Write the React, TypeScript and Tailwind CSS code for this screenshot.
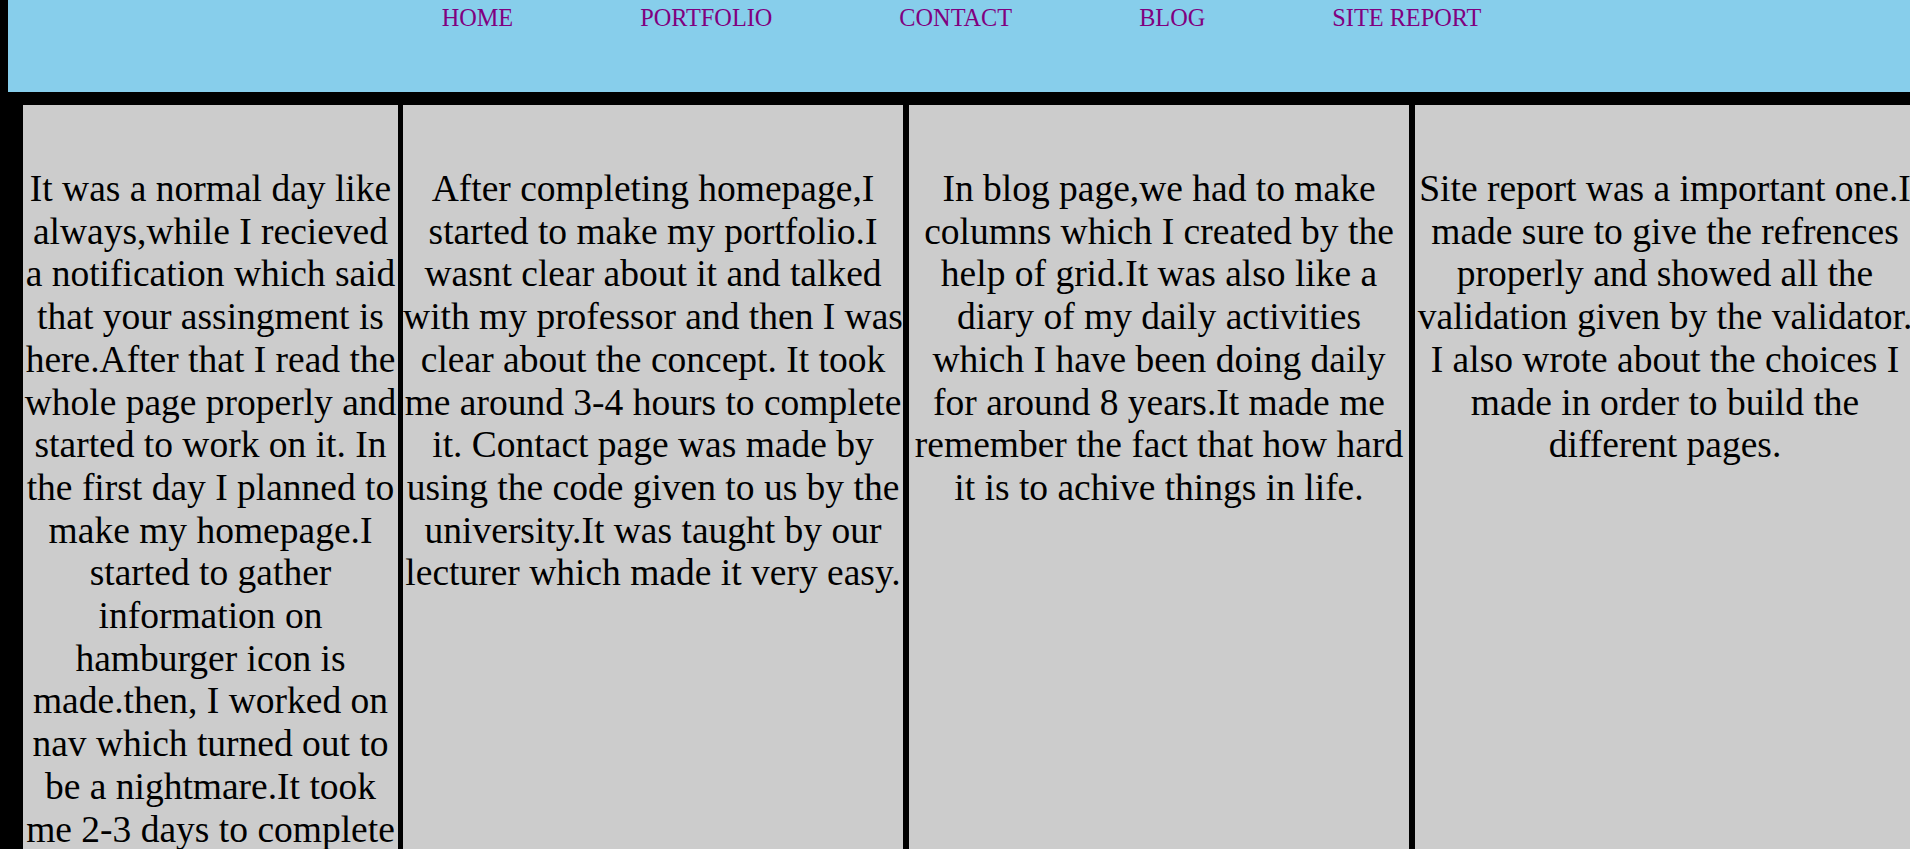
import React from 'react';

const links = ['HOME', 'PORTFOLIO', 'CONTACT', 'BLOG', 'SITE REPORT'];

const columns = [
  {
    text: 'It was a normal day like always,while I recieved a notification which said that your assingment is here.After that I read the whole page properly and started to work on it. In the first day I planned to make my homepage.I started to gather information on hamburger icon is made.then, I worked on nav which turned out to be a nightmare.It took me 2-3 days to complete it.',
    cls: 'w-[375px]',
  },
  {
    text: 'After completing homepage,I started to make my portfolio.I wasnt clear about it and talked with my professor and then I was clear about the concept. It took me around 3-4 hours to complete it. Contact page was made by using the code given to us by the university.It was taught by our lecturer which made it very easy.',
    cls: 'w-[500px] ml-[5px]',
  },
  {
    text: 'In blog page,we had to make columns which I created by the help of grid.It was also like a diary of my daily activities which I have been doing daily for around 8 years.It made me remember the fact that how hard it is to achive things in life.',
    cls: 'w-[500px] ml-[6px]',
  },
  {
    text: 'Site report was a important one.I made sure to give the refrences properly and showed all the validation given by the validator. I also wrote about the choices I made in order to build the different pages.',
    cls: 'w-[500px] ml-[6px]',
  },
];

const App = () => {
  return (
    <div className="bg-black h-screen overflow-hidden font-['Liberation_Serif','Times_New_Roman',serif]">
      <div className="w-[1915px]">
        {/* nav */}
        <nav className="ml-[8px] h-[92px] bg-[#87ceeb] pt-[4px]">
          <ul className="flex justify-center gap-[127px] text-[24.3px] leading-[27.6px] text-[#800080]">
            {links.map((l) => (
              <li key={l}>
                <a href="#" className="text-[#800080]">
                  {l}
                </a>
              </li>
            ))}
          </ul>
        </nav>
        {/* columns */}
        <div className="flex mt-[13px] pl-[23px]">
          {columns.map((c, i) => (
            <div
              key={i}
              className={`${c.cls} shrink-0 bg-[#cccccc] min-h-[760px] pt-[63px] text-center text-black text-[37.5px] leading-[42.7px]`}
            >
              <p>{c.text}</p>
            </div>
          ))}
        </div>
      </div>
    </div>
  );
};

export default App;
